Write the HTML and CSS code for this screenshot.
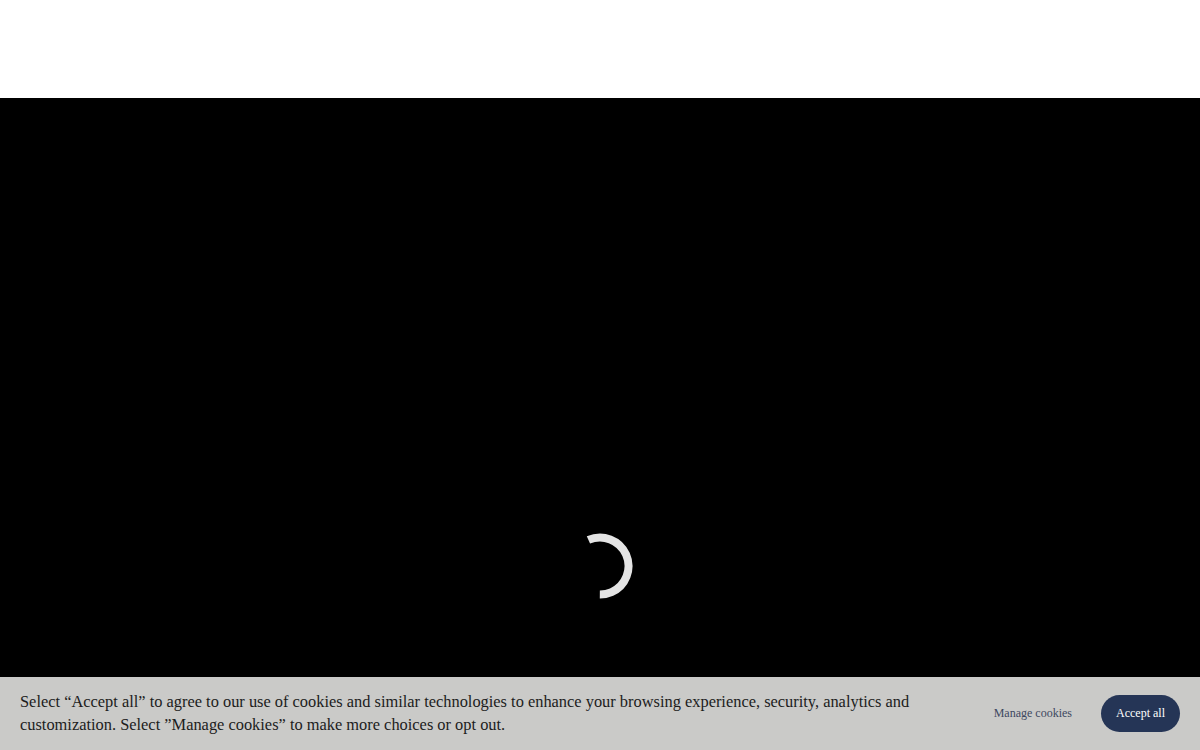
FILE: index.html
```html
<!DOCTYPE html>
<html lang="en">
<head>
<meta charset="utf-8">
<title>Video</title>
<link rel="stylesheet" href="styles.css">
</head>
<body>
<header class="top"></header>
<main class="stage">
  <svg class="spinner" width="66" height="66" viewBox="0 0 66 66" aria-hidden="true">
    <circle cx="33" cy="33" r="28.5" fill="none" stroke="#e4e4e4" stroke-width="8"
      stroke-dasharray="101.5 200" transform="rotate(-114 33 33)"/>
  </svg>
</main>
<div class="cookie-bar">
  <p class="cookie-text">Select “Accept all” to agree to our use of cookies and similar technologies to enhance your browsing experience, security, analytics and customization. Select ”Manage cookies” to make more choices or opt out.</p>
  <div class="cookie-actions">
    <button class="btn-manage" type="button">Manage cookies</button>
    <button class="btn-accept" type="button">Accept all</button>
  </div>
</div>
</body>
</html>
```
FILE: styles.css
```css
html, body {
  margin: 0;
  padding: 0;
  height: 100%;
  overflow: hidden;
  background: #ffffff;
  font-family: "Liberation Serif", "Times New Roman", serif;
}
.top {
  height: 98px;
  background: #ffffff;
}
.stage {
  height: 652px;
  background: #000000;
  display: flex;
  justify-content: center;
  align-items: flex-start;
  padding-top: 435px;
  box-sizing: border-box;
}
.spinner {
  display: block;
}
.cookie-bar {
  position: fixed;
  left: 0;
  right: 0;
  bottom: 0;
  height: 73px;
  box-sizing: border-box;
  background: #cacac8;
  display: flex;
  align-items: center;
  justify-content: space-between;
  padding: 0 20px;
}
.cookie-text {
  margin: 0 0 2px;
  max-width: 930px;
  font-size: 16.4px;
  line-height: 23px;
  color: #1c1c1c;
}
.cookie-actions {
  display: flex;
  align-items: center;
  gap: 14px;
}
.btn-manage {
  background: none;
  border: 0;
  font-family: inherit;
  font-size: 12px;
  line-height: 15px;
  color: #3d4860;
  padding: 11px 15px;
  cursor: pointer;
}
.btn-accept {
  background: #253556;
  border: 0;
  border-radius: 19px;
  font-family: inherit;
  font-size: 12px;
  line-height: 15px;
  color: #ffffff;
  padding: 11px 15px;
  cursor: pointer;
}
```
